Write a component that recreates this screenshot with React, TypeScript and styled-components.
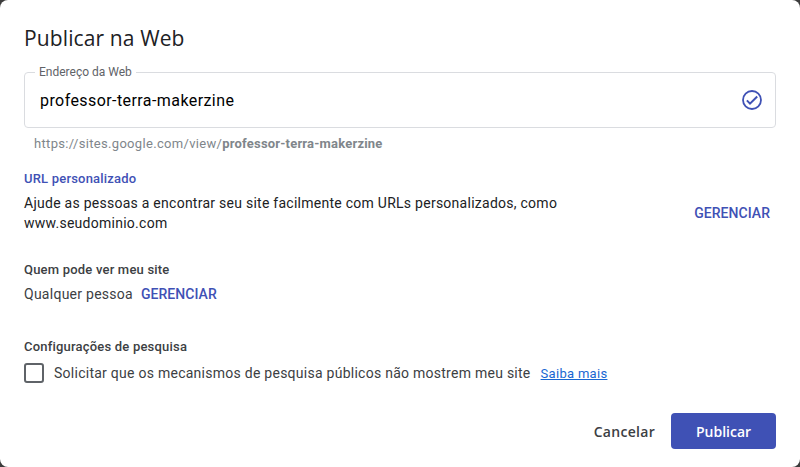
import React from 'react';
import styled, { createGlobalStyle } from 'styled-components';

const GlobalStyle = createGlobalStyle`
  html, body {
    margin: 0;
    padding: 0;
    background: #3c3c3c;
  }
  body {
    font-family: Roboto, "Liberation Sans", sans-serif;
  }
`;

function CheckCircle() {
  return (
    <CheckIcon width="22" height="22" viewBox="0 0 22 22" fill="none" stroke="#3f51b5">
      <circle cx="11" cy="11" r="9" strokeWidth="1.8" />
      <path d="M5.9 11.4 L9 14.6 L16.2 7.5" strokeWidth="2" />
    </CheckIcon>
  );
}

export default function App(): JSX.Element {
  return (
    <Dialog>
      <GlobalStyle />
      <Title>Publicar na Web</Title>
      <Field>
        <FieldLabel>Endereço da Web</FieldLabel>
        <FieldBody>
          <FieldValue>professor-terra-makerzine</FieldValue>
          <CheckCircle />
        </FieldBody>
      </Field>
      <Address>
        https://sites.google.com/view/
        <AddressSlug>professor-terra-makerzine</AddressSlug>
      </Address>

      <AccentHeading>URL personalizado</AccentHeading>
      <CustomRow>
        <Description>
          Ajude as pessoas a encontrar seu site facilmente com URLs personalizados, como
          www.seudominio.com
        </Description>
        <LinkButton>GERENCIAR</LinkButton>
      </CustomRow>

      <Heading $top={29}>Quem pode ver meu site</Heading>
      <ViewerRow>
        <BodyText>Qualquer pessoa</BodyText>
        <LinkButton>GERENCIAR</LinkButton>
      </ViewerRow>

      <Heading $top={35}>Configurações de pesquisa</Heading>
      <SearchRow>
        <Checkbox />
        <BodyText>Solicitar que os mecanismos de pesquisa públicos não mostrem meu site</BodyText>
        <LearnMore href="#">Saiba mais</LearnMore>
      </SearchRow>

      <Footer>
        <CancelButton>Cancelar</CancelButton>
        <PublishButton>Publicar</PublishButton>
      </Footer>
    </Dialog>
  );
}

const Dialog = styled.div`
  box-sizing: border-box;
  width: 800px;
  height: 467px;
  padding: 24px 24px 0;
  background: #fff;
  border-radius: 8px;
  display: flex;
  flex-direction: column;
  overflow: hidden;
`;

const Title = styled.h1`
  margin: 0;
  height: 28px;
  font-family: "Open Sans", sans-serif;
  font-size: 21px;
  font-weight: 400;
  line-height: 28px;
  letter-spacing: 0.12px;
  color: #202124;
`;

const Field = styled.fieldset`
  box-sizing: border-box;
  margin: 13px 0 0;
  padding: 0 12px 0 15px;
  height: 63px;
  min-width: 0;
  border: 1px solid #dadce0;
  border-radius: 4px;
`;

const FieldLabel = styled.legend`
  margin-left: -5px;
  padding: 0 4px;
  font-size: 12px;
  line-height: 14px;
  color: #5f6368;
`;

const FieldBody = styled.div`
  height: 43px;
  display: flex;
  align-items: center;
  justify-content: space-between;
`;

const CheckIcon = styled.svg`
  margin-bottom: 2px;
`;

const FieldValue = styled.span`
  font-size: 16px;
  color: #000;
  letter-spacing: 0.42px;
`;

const Address = styled.div`
  margin: 8px 0 0 10px;
  font-size: 13px;
  line-height: 16px;
  color: #80868b;
  letter-spacing: 0.32px;
`;

const AddressSlug = styled.b`
  letter-spacing: 0.2px;
`;

const AccentHeading = styled.div`
  margin-top: 19px;
  font-size: 13px;
  font-weight: 500;
  line-height: 16px;
  letter-spacing: 0.2px;
  color: #3f51b5;
`;

const CustomRow = styled.div`
  margin-top: 6px;
  display: flex;
  align-items: center;
  justify-content: space-between;
`;

const Description = styled.div`
  width: 560px;
  font-size: 14px;
  line-height: 20px;
  letter-spacing: 0.26px;
  color: #202124;
`;

const LinkButton = styled.button`
  border: 0;
  background: none;
  padding: 0 6px 0 5px;
  font-family: inherit;
  font-size: 14px;
  font-weight: 500;
  letter-spacing: 0.05px;
  color: #3f51b5;
`;

const Heading = styled.div<{ $top: number }>`
  margin-top: ${(props) => props.$top}px;
  font-size: 13px;
  font-weight: 500;
  line-height: 16px;
  letter-spacing: 0.2px;
  color: #3c4043;
`;

const ViewerRow = styled.div`
  margin-top: 6px;
  display: flex;
  align-items: center;
  gap: 3px;
`;

const BodyText = styled.span`
  font-size: 14px;
  line-height: 20px;
  color: #3c4043;
  letter-spacing: 0.26px;
`;

const SearchRow = styled.div`
  margin-top: 8px;
  display: flex;
  align-items: center;
`;

const Checkbox = styled.span`
  box-sizing: border-box;
  width: 20px;
  height: 20px;
  margin-right: 10px;
  border: 2px solid #5f6368;
  border-radius: 3px;
`;

const LearnMore = styled.a`
  margin-left: 10px;
  font-size: 13px;
  letter-spacing: 0.3px;
  color: #1967d2;
`;

const Footer = styled.div`
  margin-top: auto;
  height: 54px;
  display: flex;
  align-items: flex-start;
  justify-content: flex-end;
  gap: 16px;
`;

const CancelButton = styled.button`
  height: 36px;
  border: 0;
  background: none;
  padding: 0;
  font-family: "Open Sans", sans-serif;
  font-size: 14px;
  font-weight: 600;
  letter-spacing: 0.3px;
  color: #3c4043;
`;

const PublishButton = styled.button`
  width: 105px;
  height: 36px;
  border: 0;
  border-radius: 4px;
  background: #3f51b5;
  font-family: "Open Sans", sans-serif;
  font-size: 14px;
  font-weight: 600;
  color: #fff;
`;
